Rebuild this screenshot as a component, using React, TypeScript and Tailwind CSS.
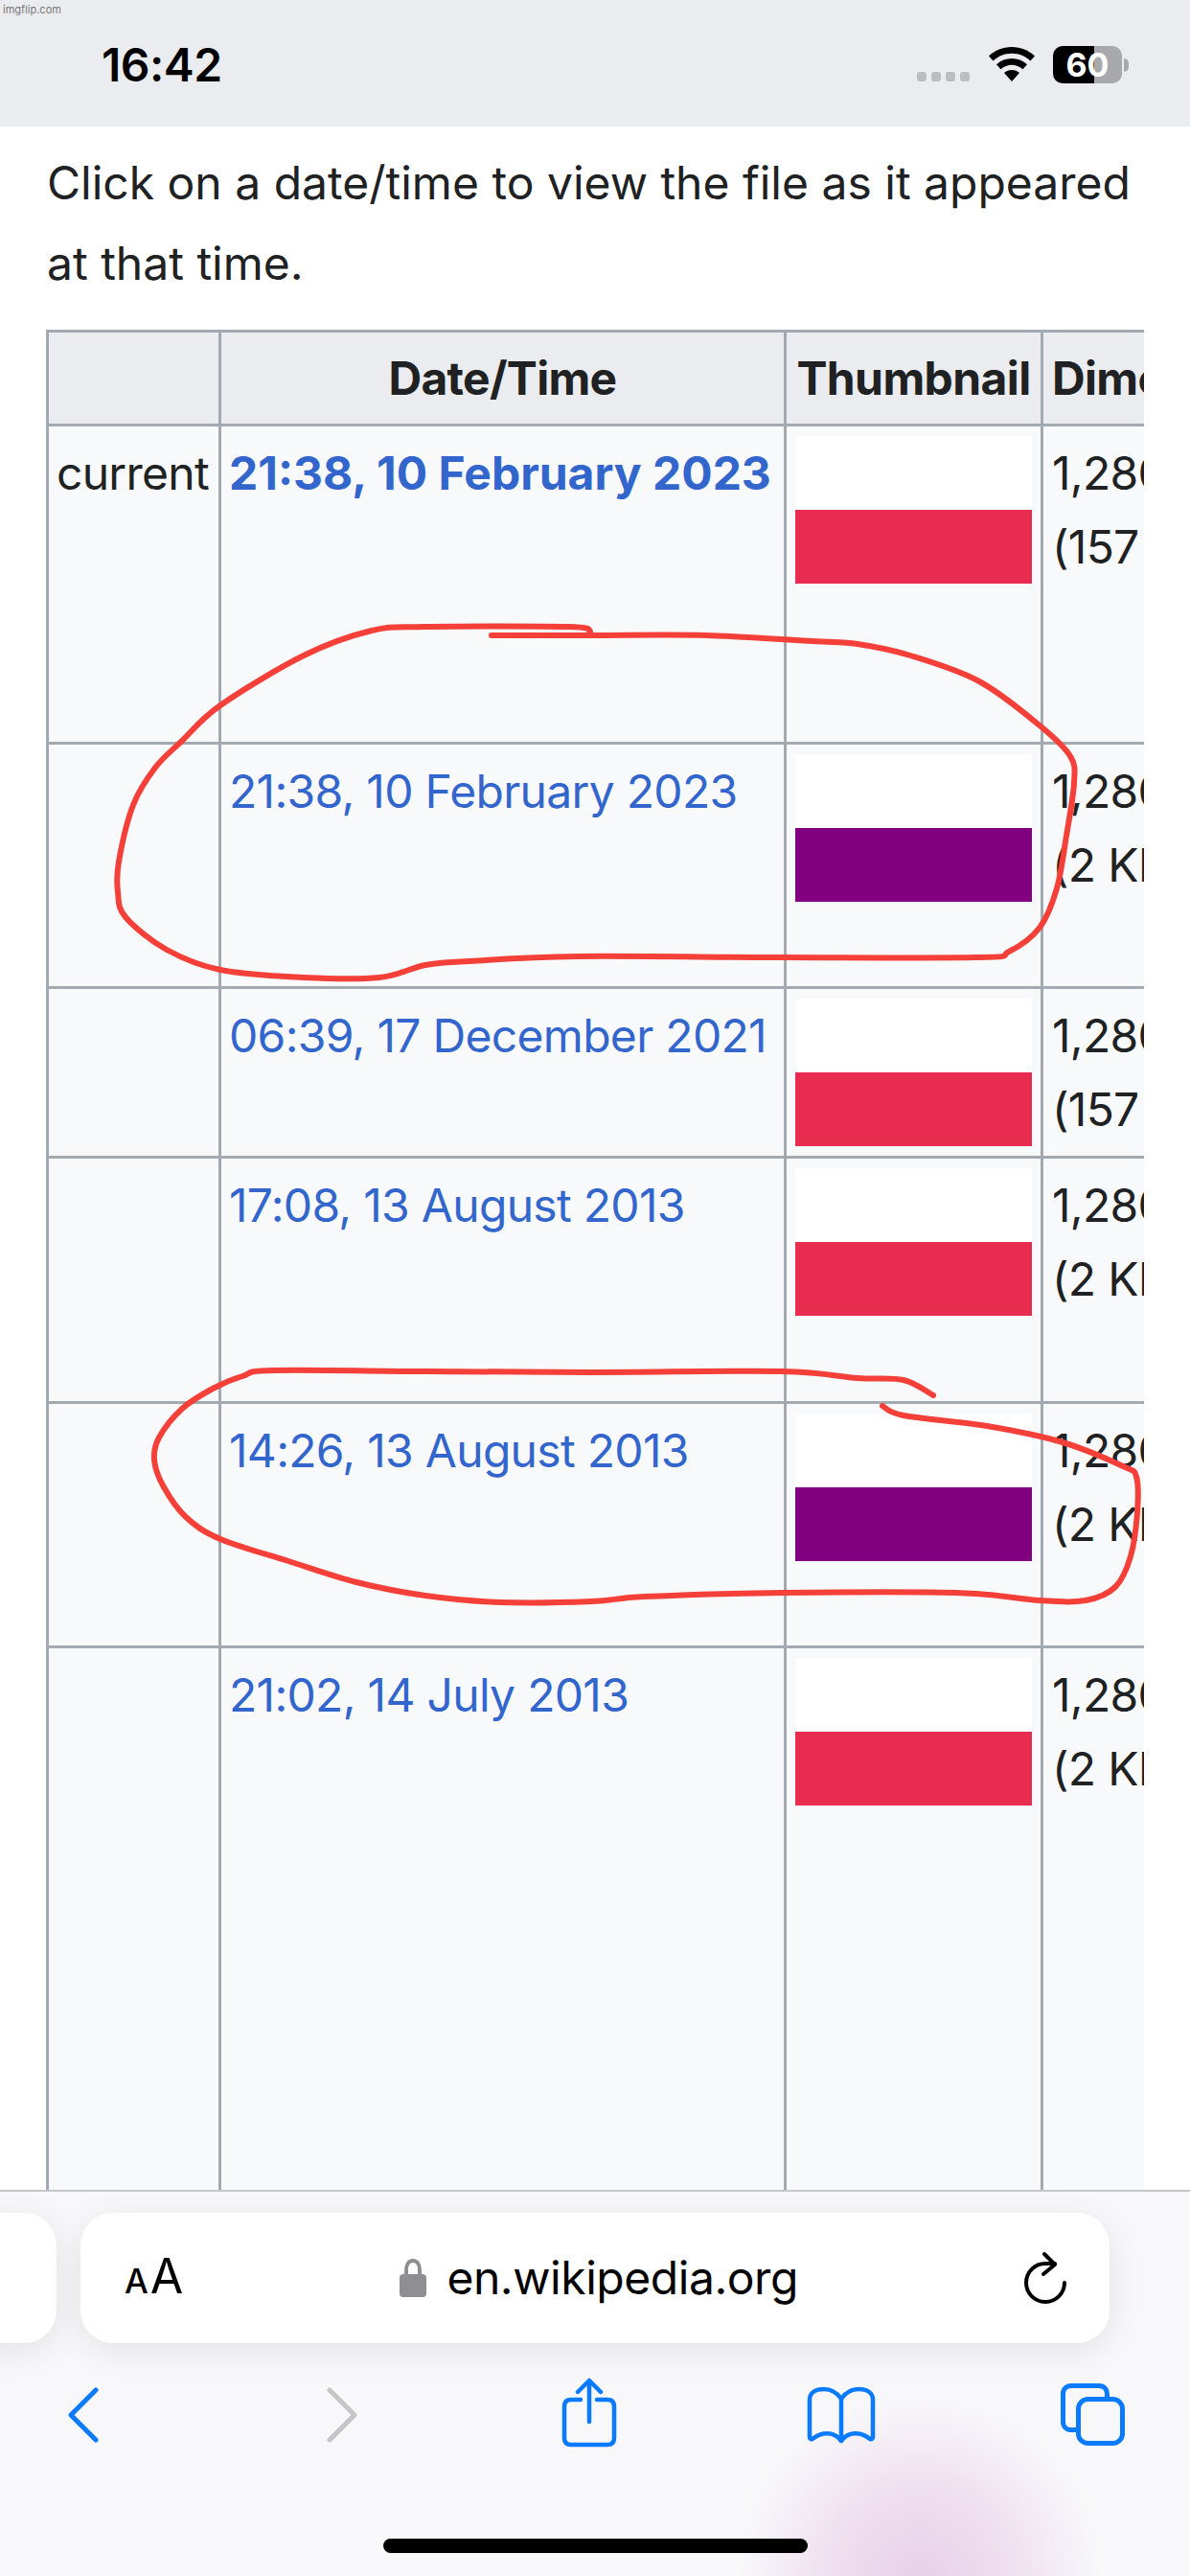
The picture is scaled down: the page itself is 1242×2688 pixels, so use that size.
const RED_1: [number, number][] = [[513,663],[616,663],[737,663],[848,669],[895,672],[950,684],[1022,711],[1085,757],[1117,789],[1121,817],[1113,872],[1103,927],[1085,968],[1053,993],[1022,999],[816,999],[602,998],[491,1003],[444,1007],[396,1020],[317,1020],[230,1012],[174,991],[131,957],[123,931],[124,899],[139,840],[162,801],[190,773],[230,736],[317,684],[388,658],[444,654],[594,654],[616,659]];
const RED_2: [number, number][] = [[974,1456],[943,1440],[895,1438],[816,1431],[618,1432],[444,1431],[285,1430],[253,1436],[222,1449],[190,1470],[166,1500],[161,1523],[170,1550],[194,1583],[230,1606],[301,1629],[372,1651],[444,1665],[523,1672],[618,1671],[673,1666],[816,1662],[998,1662],[1085,1670],[1133,1670],[1164,1656],[1180,1624],[1187,1578],[1186,1541],[1172,1530],[1109,1505],[1030,1488],[943,1477],[921,1467]];

function smooth(p: [number, number][]) {
  let d = `M${p[0][0]} ${p[0][1]}`;
  for (let i = 0; i < p.length - 1; i++) {
    const a = p[Math.max(i - 1, 0)], b = p[i], c = p[i + 1], e = p[Math.min(i + 2, p.length - 1)];
    d += ` C${b[0] + (c[0] - a[0]) / 6} ${b[1] + (c[1] - a[1]) / 6} ${c[0] - (e[0] - b[0]) / 6} ${c[1] - (e[1] - b[1]) / 6} ${c[0]} ${c[1]}`;
  }
  return d;
}

const rows = [
  { h: "h-[332px]", cur: "current", date: "21:38, 10 February 2023", bold: true, color: "bg-[#e72c50]", size: "(157 bytes)" },
  { h: "h-[255px]", cur: "", date: "21:38, 10 February 2023", bold: false, color: "bg-[#800080]", size: "(2 KB)" },
  { h: "h-[177px]", cur: "", date: "06:39, 17 December 2021", bold: false, color: "bg-[#e72c50]", size: "(157 bytes)" },
  { h: "h-[256px]", cur: "", date: "17:08, 13 August 2013", bold: false, color: "bg-[#e72c50]", size: "(2 KB)" },
  { h: "h-[255px]", cur: "", date: "14:26, 13 August 2013", bold: false, color: "bg-[#800080]", size: "(2 KB)" },
  { h: "h-[600px]", cur: "", date: "21:02, 14 July 2013", bold: false, color: "bg-[#e72c50]", size: "(2 KB)" },
];

export default function App() {
  return (
    <div className="relative w-[1242px] h-[2688px] overflow-hidden bg-white flex flex-col font-[Inter,sans-serif] text-[#202122]">
      <header className="relative h-[132px] shrink-0 bg-[#ebecf0] flex items-start pt-[40px] pl-[106px] pr-[64px]">
        <span className="absolute left-[3px] top-[3px] text-[11px] leading-[14px] text-[#777]">imgflip.com</span>
        <span className="text-[48px] leading-[56px] font-semibold text-black tracking-[-0.5px]">16:42</span>
        <div className="ml-auto mt-[8px] h-[39px] flex items-start">
          <div className="mt-[27px] flex gap-[5px]">
            {[0, 1, 2, 3].map((i) => <div key={i} className="w-[10px] h-[10px] rounded-[3px] bg-[#bcbdc1]" />)}
          </div>
          <svg className="ml-[20px] mt-[1px]" width="48" height="36" viewBox="0 0 48 36">
            <path d="M24 0C14.500 0 6.500 3.400 0 9.500L4.500 14.500C10 9.500 16.500 6.800 24 6.800C31.500 6.800 38 9.500 43.500 14.500L48 9.500C41.500 3.400 33.500 0 24 0Z" fill="#000" />
            <path d="M24 12C18 12 12.500 14.200 8 18.300L12.500 23.300C16 20.300 19.800 18.800 24 18.800C28.200 18.800 32 20.300 35.500 23.300L40 18.300C35.500 14.200 30 12 24 12Z" fill="#000" />
            <path d="M24 24C21 24 18.500 25 16 27L24 36L32 27C29.500 25 27 24 24 24Z" fill="#000" />
          </svg>
          <div className="ml-[19px] w-[72px] h-[39px] rounded-[10px] bg-[linear-gradient(to_right,#000_60%,#a8a9ad_60%)] text-center text-[34px] leading-[39px] font-bold text-white">60</div>
          <div className="ml-[2px] mt-[13px] w-[5px] h-[14px] rounded-r-[5px] bg-[#a8a9ad]" />
        </div>
      </header>

      <main className="flex-1 min-h-0 overflow-hidden">
        <p className="pl-[49px] pt-[17px] text-[48px] leading-[84px] h-[212px]">
          Click on a date/time to view the file as it appeared<br />at that time.
        </p>
        <div className="ml-[48px] w-[1146px] overflow-hidden">
          <table className="table-fixed w-[1400px] border-collapse bg-[#f8f9fa] text-[48px] leading-[77px] tracking-[-0.7px]">
            <colgroup>
              <col className="w-[180px]" />
              <col className="w-[590px]" />
              <col className="w-[268px]" />
              <col className="w-[362px]" />
            </colgroup>
            <thead>
              <tr className="h-[98px] bg-[#eaecf0]">
                <th className="border-[3px] border-[#a2a9b1]" />
                <th className="border-[3px] border-[#a2a9b1] font-bold text-center">Date/Time</th>
                <th className="border-[3px] border-[#a2a9b1] font-bold text-center whitespace-nowrap tracking-[-0.6px]">Thumbnail</th>
                <th className="border-[3px] border-[#a2a9b1] font-bold text-left pl-[9px]">Dimensions</th>
              </tr>
            </thead>
            <tbody>
              {rows.map((r) => (
                <tr key={r.date + r.size} className={r.h}>
                  <td className="border-[3px] border-[#a2a9b1] align-top pt-[10px] pr-[2px] text-center">{r.cur}</td>
                  <td className={`border-[3px] border-[#a2a9b1] align-top pt-[10px] pl-[8px] whitespace-nowrap text-[#3366cc] ${r.bold ? "font-bold tracking-[0px]" : "font-normal"}`}>{r.date}</td>
                  <td className="border-[3px] border-[#a2a9b1] align-top pt-[10px] px-[9px]">
                    <div className="h-[77px] bg-white" />
                    <div className={`h-[77px] ${r.color}`} />
                  </td>
                  <td className="border-[3px] border-[#a2a9b1] align-top pt-[10px] pl-[9px] whitespace-nowrap">
                    1,280 × 800<br />{r.size}
                  </td>
                </tr>
              ))}
            </tbody>
          </table>
        </div>
      </main>

      <footer className="h-[403px] shrink-0 overflow-hidden border-t-[2px] border-[#c6c7cc] flex flex-col bg-[radial-gradient(circle_190px_at_960px_403px,#e8d0e8_0%,#efe0ef_50%,#f8f8fb_100%)]">
        <div className="mt-[22px] -ml-[60px] flex gap-[25px]">
          <div className="w-[119px] h-[136px] shrink-0 rounded-[34px] bg-white shadow-[0_8px_36px_rgba(0,0,0,0.09)]" />
          <div className="w-[1074px] h-[136px] shrink-0 rounded-[34px] bg-white shadow-[0_8px_36px_rgba(0,0,0,0.09)] flex items-center justify-between pl-[46px] pr-[44px] text-black">
            <div className="flex items-baseline gap-[2px] font-medium">
              <span className="text-[35px] leading-[60px]">A</span>
              <span className="text-[50px] leading-[60px] font-normal">A</span>
            </div>
            <div className="flex items-center gap-[21px] mr-[9px]">
              <svg width="28" height="40" viewBox="0 0 28 40">
                <path d="M7 18V12C7 6 9.500 2 14 2C18.500 2 21 6 21 12V18" fill="none" stroke="#8e8e93" strokeWidth="4" />
                <rect x="0" y="16" width="28" height="24" rx="4" fill="#8e8e93" />
              </svg>
              <span className="text-[48px] leading-[60px] tracking-[-0.45px]">en.wikipedia.org</span>
            </div>
            <svg width="46" height="56" viewBox="0 0 46 56" fill="none" stroke="#000" strokeWidth="4" strokeLinecap="round" strokeLinejoin="round">
              <path d="M43 33A20 20 0 1 1 23 13H33" />
              <path d="M22 3L33 14L21 24" />
            </svg>
          </div>
        </div>
        <div className="mt-[36px] pl-[70px] flex">
          <svg width="34" height="74" viewBox="0 -11 34 74" fill="none" stroke="#0a7aff" strokeWidth="5" strokeLinecap="round" strokeLinejoin="round">
            <path d="M30 2L4 28L30 54" />
          </svg>
          <svg className="ml-[236px]" width="34" height="74" viewBox="0 -11 34 74" fill="none" stroke="#c6c6c8" strokeWidth="5" strokeLinecap="round" strokeLinejoin="round">
            <path d="M4 2L30 28L4 54" />
          </svg>
          <svg className="ml-[212px]" width="58" height="74" viewBox="0 0 58 74" fill="none" stroke="#0a7aff" strokeWidth="4.500" strokeLinecap="round" strokeLinejoin="round">
            <path d="M20 23H10C5.500 23 3 25.500 3 30V63C3 67.500 5.500 70 10 70H48C52.500 70 55 67.500 55 63V30C55 25.500 52.500 23 48 23H37" />
            <path d="M29 46V4" />
            <path d="M17 15L29 3L41 15" />
          </svg>
          <svg className="ml-[198px]" width="72" height="74" viewBox="0 -8 72 74" fill="none" stroke="#0a7aff" strokeWidth="4.500" strokeLinecap="round" strokeLinejoin="round">
            <path d="M36 14C31 7 25 4 18 4C9 4 3 8 3 15V54Q3 57 6 56C16 48 29 48 36 58C43 48 56 48 66 56Q69 57 69 54V15C69 8 63 4 54 4C47 4 41 7 36 14Z" />
            <path d="M36 14V58" />
          </svg>
          <svg className="ml-[192px]" width="69" height="74" viewBox="0 -5 69 74" fill="none" stroke="#0a7aff" strokeWidth="5" strokeLinejoin="round">
            <path d="M49.500 15V13C49.500 7 46 3.500 41 3.500H12C7 3.500 3.500 7 3.500 12V41C3.500 46 7 49.500 12 49.500H17" />
            <rect x="19.500" y="17.500" width="46" height="46" rx="10" />
          </svg>
        </div>
        <div className="mt-auto mb-[24px] self-center w-[443px] h-[15px] rounded-full bg-black" />
      </footer>

      <svg className="absolute left-0 top-0 pointer-events-none" width="1242" height="2688" viewBox="0 0 1242 2688" fill="none" stroke="#f5403a" strokeWidth="6" strokeLinecap="round" strokeLinejoin="round">
        <path d={smooth(RED_1)} />
        <path d={smooth(RED_2)} />
      </svg>
    </div>
  );
}
